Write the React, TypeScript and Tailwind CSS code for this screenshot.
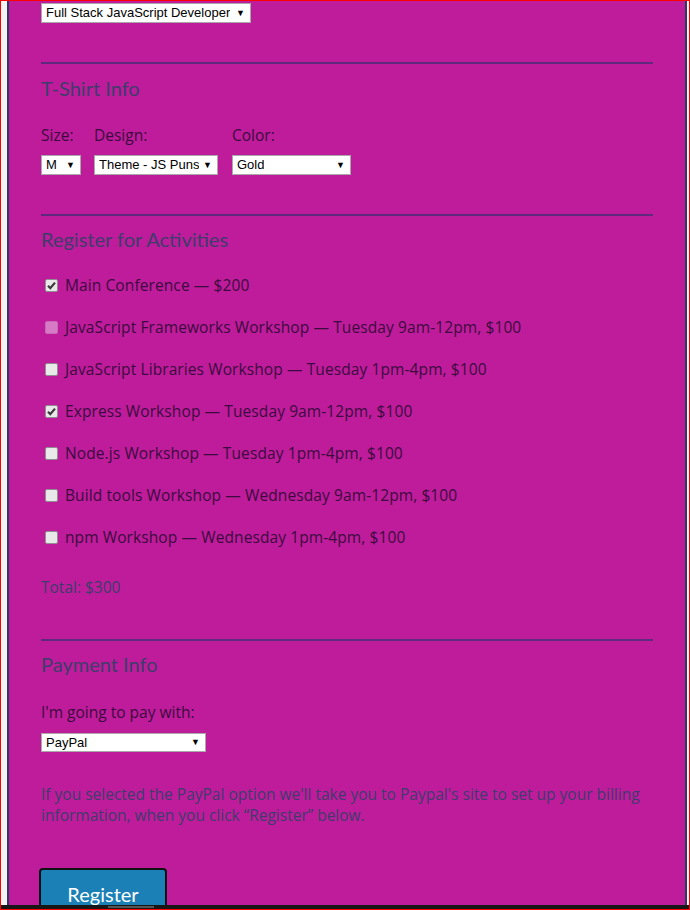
import React from 'react';

const activities = [
  { label: 'Main Conference — $200', checked: true },
  { label: 'JavaScript Frameworks Workshop — Tuesday 9am-12pm, $100', disabled: true },
  { label: 'JavaScript Libraries Workshop — Tuesday 1pm-4pm, $100' },
  { label: 'Express Workshop — Tuesday 9am-12pm, $100', checked: true },
  { label: 'Node.js Workshop — Tuesday 1pm-4pm, $100' },
  { label: 'Build tools Workshop — Wednesday 9am-12pm, $100' },
  { label: 'npm Workshop — Wednesday 1pm-4pm, $100' },
];

function FakeSelect({ value, className }: { value: string; className: string }) {
  return (
    <div
      className={`flex items-center justify-between bg-white border border-[#a9a9a9] pl-[4px] pr-[5px] text-[13px] text-black font-['Liberation_Sans',Arial,sans-serif] ${className}`}
    >
      <span className="whitespace-nowrap overflow-hidden">{value}</span>
      <span className="text-[9px] leading-none ml-[3px] shrink-0">▼</span>
    </div>
  );
}

function Checkbox({ checked, disabled }: { checked?: boolean; disabled?: boolean }) {
  if (disabled) {
    return <span className="w-[13px] h-[13px] rounded-[2px] bg-[#d77ac6] border border-[#c967b8] shrink-0" />;
  }
  return (
    <span className="w-[13px] h-[13px] rounded-[2px] bg-[#e9e9e9] border border-[#8f8f8f] shrink-0 flex items-center justify-center">
      {checked && (
        <svg width="9" height="9" viewBox="0 0 9 9">
          <path d="M1 4.8 L3.3 7.2 L8 1.6" fill="none" stroke="#3a3a3a" strokeWidth="2.2" />
        </svg>
      )}
    </span>
  );
}

function Divider({ mt }: { mt: string }) {
  return <div className={`h-[2px] bg-[#5f2a7d] ${mt}`} />;
}

export default function App() {
  const heading = "text-[20px] leading-[24px] text-[#3d3c6c] font-['Lato',sans-serif]";
  const label = "text-[15.5px] leading-[20px] text-[#3a0b3e] font-['Open_Sans',sans-serif]";
  const muted = "text-[15.5px] text-[#3d3c6c] font-['Open_Sans',sans-serif]";
  return (
    <div className="w-[690px] h-[910px] border border-[#ff0000] bg-[#f3f3f3] flex flex-col overflow-hidden font-['Lato','Noto_Sans',sans-serif]">
      <div className="flex-1 overflow-hidden pl-[6px] pr-[2px]">
        <div className="h-full bg-[#bf1c9b] border-x-2 border-[#2e3a5c] px-8 pt-[2px]">
          <FakeSelect value="Full Stack JavaScript Developer" className="w-[210px] h-[20px]" />

          <Divider mt="mt-[39px]" />
          <h2 className={`${heading} mt-[12px]`}>T-Shirt Info</h2>
          <div className="flex mt-[25px]">
            <div className="w-[53px]">
              <div className={label}>Size:</div>
              <FakeSelect value="M" className="w-[40px] h-[20px] mt-[10px]" />
            </div>
            <div className="w-[138px]">
              <div className={label}>Design:</div>
              <FakeSelect value="Theme - JS Puns" className="w-[124px] h-[20px] mt-[10px]" />
            </div>
            <div>
              <div className={label}>Color:</div>
              <FakeSelect value="Gold" className="w-[119px] h-[20px] mt-[10px]" />
            </div>
          </div>

          <Divider mt="mt-[39px]" />
          <h2 className={`${heading} mt-[11px]`}>Register for Activities</h2>
          <div className="mt-[13px]">
            {activities.map((a) => (
              <div key={a.label} className="h-[42px] flex items-center pl-[4px] gap-[7px]">
                <Checkbox checked={a.checked} disabled={a.disabled} />
                <span className={`${label} tracking-[0.1px]`}>{a.label}</span>
              </div>
            ))}
          </div>
          <div className={`${muted} leading-[20px] mt-[19px]`}>Total: $300</div>

          <Divider mt="mt-[42px]" />
          <h2 className={`${heading} mt-[11px]`}>Payment Info</h2>
          <div className={`${label} mt-[26px]`}>I'm going to pay with:</div>
          <FakeSelect value="PayPal" className="w-[165px] h-[19px] mt-[11px]" />
          <p className={`${muted} leading-[21px] mt-[32px] w-[612px]`}>
            If you selected the PayPal option we'll take you to Paypal's site to set up your billing information, when you click “Register” below.
          </p>
          <button className="mt-[42px] ml-[-2px] w-[128px] h-[52px] bg-[#1a80b5] border-2 border-[#111] rounded-[4px] text-white text-[20px] font-['Lato',sans-serif]">
            Register
          </button>
        </div>
      </div>
      <div className="h-[4px] bg-[#171717] relative shrink-0">
        <div className="absolute left-[107px] top-[1px] w-[46px] h-[2px] bg-[#555]" />
      </div>
    </div>
  );
}
